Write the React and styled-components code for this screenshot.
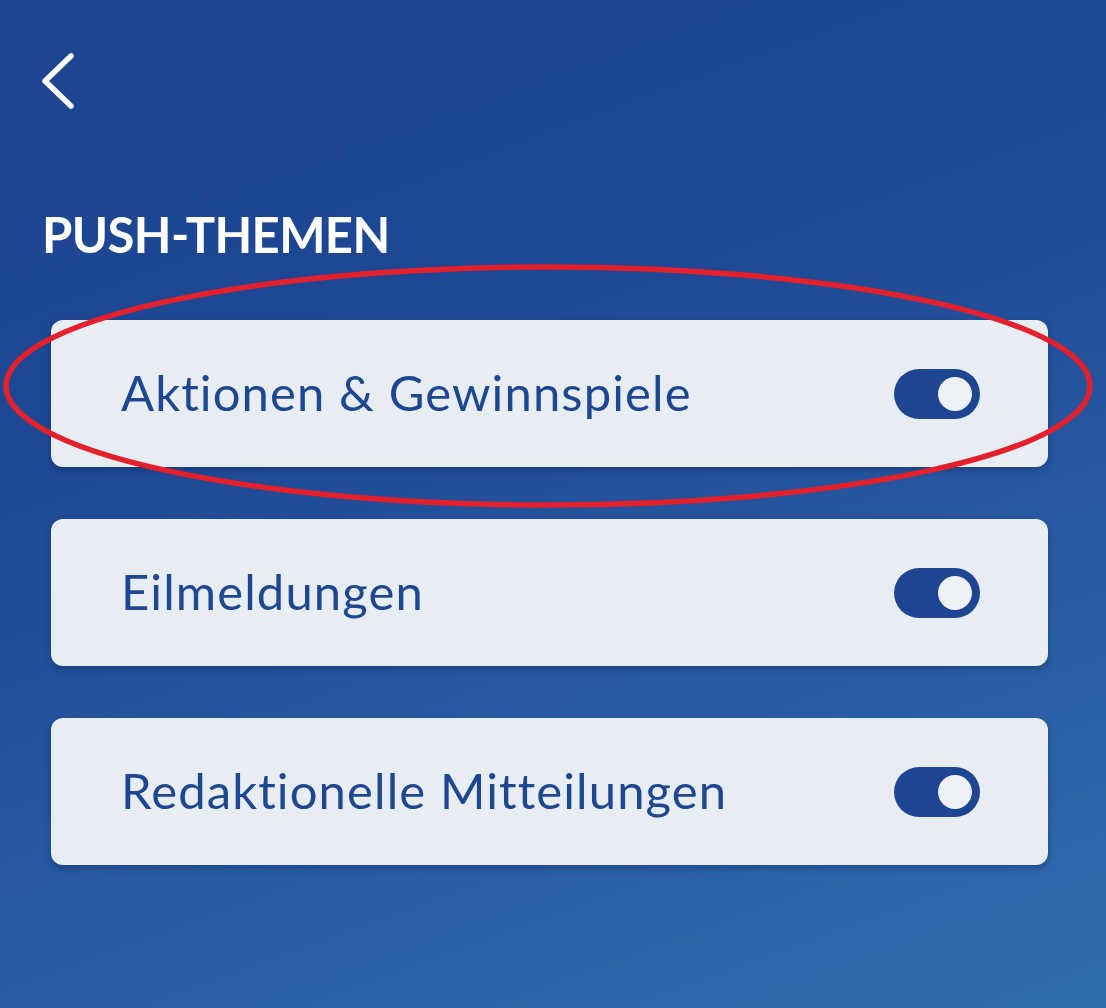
import React from "react";
import styled, { createGlobalStyle } from "styled-components";

const GlobalStyle = createGlobalStyle`
  html, body {
    margin: 0;
    padding: 0;
  }
  body {
    font-family: Lato, "Noto Sans", sans-serif;
  }
`;

const Page = styled.div`
  position: relative;
  width: 1106px;
  height: 1008px;
  overflow: hidden;
  background: linear-gradient(160deg, #1c4491 0%, #1f4894 35%, #2a5fa5 75%, #306daf 100%);
  box-sizing: border-box;
  padding: 52px 58px 0 51px;
`;

const BackButton = styled.button`
  display: block;
  width: 40px;
  height: 58px;
  margin-left: -12px;
  padding: 0;
  border: 0;
  background: none;
  cursor: pointer;
`;

const Title = styled.h1`
  margin: 94px 0 0 -9px;
  color: #ffffff;
  font-family: Lato, sans-serif;
  font-weight: 700;
  font-size: 49px;
  line-height: 60px;
  letter-spacing: -0.6px;
`;

const List = styled.div`
  display: flex;
  flex-direction: column;
  gap: 52px;
  margin-top: 56px;
`;

const Card = styled.div`
  display: flex;
  align-items: center;
  justify-content: space-between;
  height: 147px;
  padding: 0 68px 0 70px;
  background: #e8ecf3;
  border-radius: 12px;
  box-shadow: 0 3px 6px rgba(10, 30, 80, 0.35);
`;

const Label = styled.span`
  color: #1e4791;
  font-family: Lato, sans-serif;
  font-size: 49px;
  font-weight: 400;
  letter-spacing: 1.1px;
  margin-top: -4px;
`;

const Toggle = styled.div`
  position: relative;
  width: 86px;
  height: 50px;
  border-radius: 25px;
  background: ${(p) => (p.on ? "#1d4592" : "#9aa6bd")};
  flex-shrink: 0;
`;

const Knob = styled.div`
  position: absolute;
  top: 8px;
  left: ${(p) => (p.on ? "44px" : "8px")};
  width: 34px;
  height: 34px;
  border-radius: 50%;
  background: #eef1f5;
`;

const Marker = styled.svg`
  position: absolute;
  left: 0;
  top: 0;
  pointer-events: none;
`;

const topics = [
  "Aktionen & Gewinnspiele",
  "Eilmeldungen",
  "Redaktionelle Mitteilungen",
];

export default function App() {
  return (
    <>
      <GlobalStyle />
      <Page>
        <BackButton aria-label="Zurück">
          <svg width="40" height="58" viewBox="0 0 40 58">
            <path
              d="M32 4 L6 29 L32 54"
              fill="none"
              stroke="#ffffff"
              strokeWidth="5.5"
              strokeLinecap="round"
              strokeLinejoin="round"
            />
          </svg>
        </BackButton>
        <Title>PUSH-THEMEN</Title>
        <List>
          {topics.map((t) => (
            <Card key={t}>
              <Label>{t}</Label>
              <Toggle on>
                <Knob on />
              </Toggle>
            </Card>
          ))}
        </List>
        <Marker width="1106" height="1008">
          <ellipse
            cx="548"
            cy="386"
            rx="542"
            ry="119"
            fill="none"
            stroke="#e3202c"
            strokeWidth="5.5"
          />
        </Marker>
      </Page>
    </>
  );
}
